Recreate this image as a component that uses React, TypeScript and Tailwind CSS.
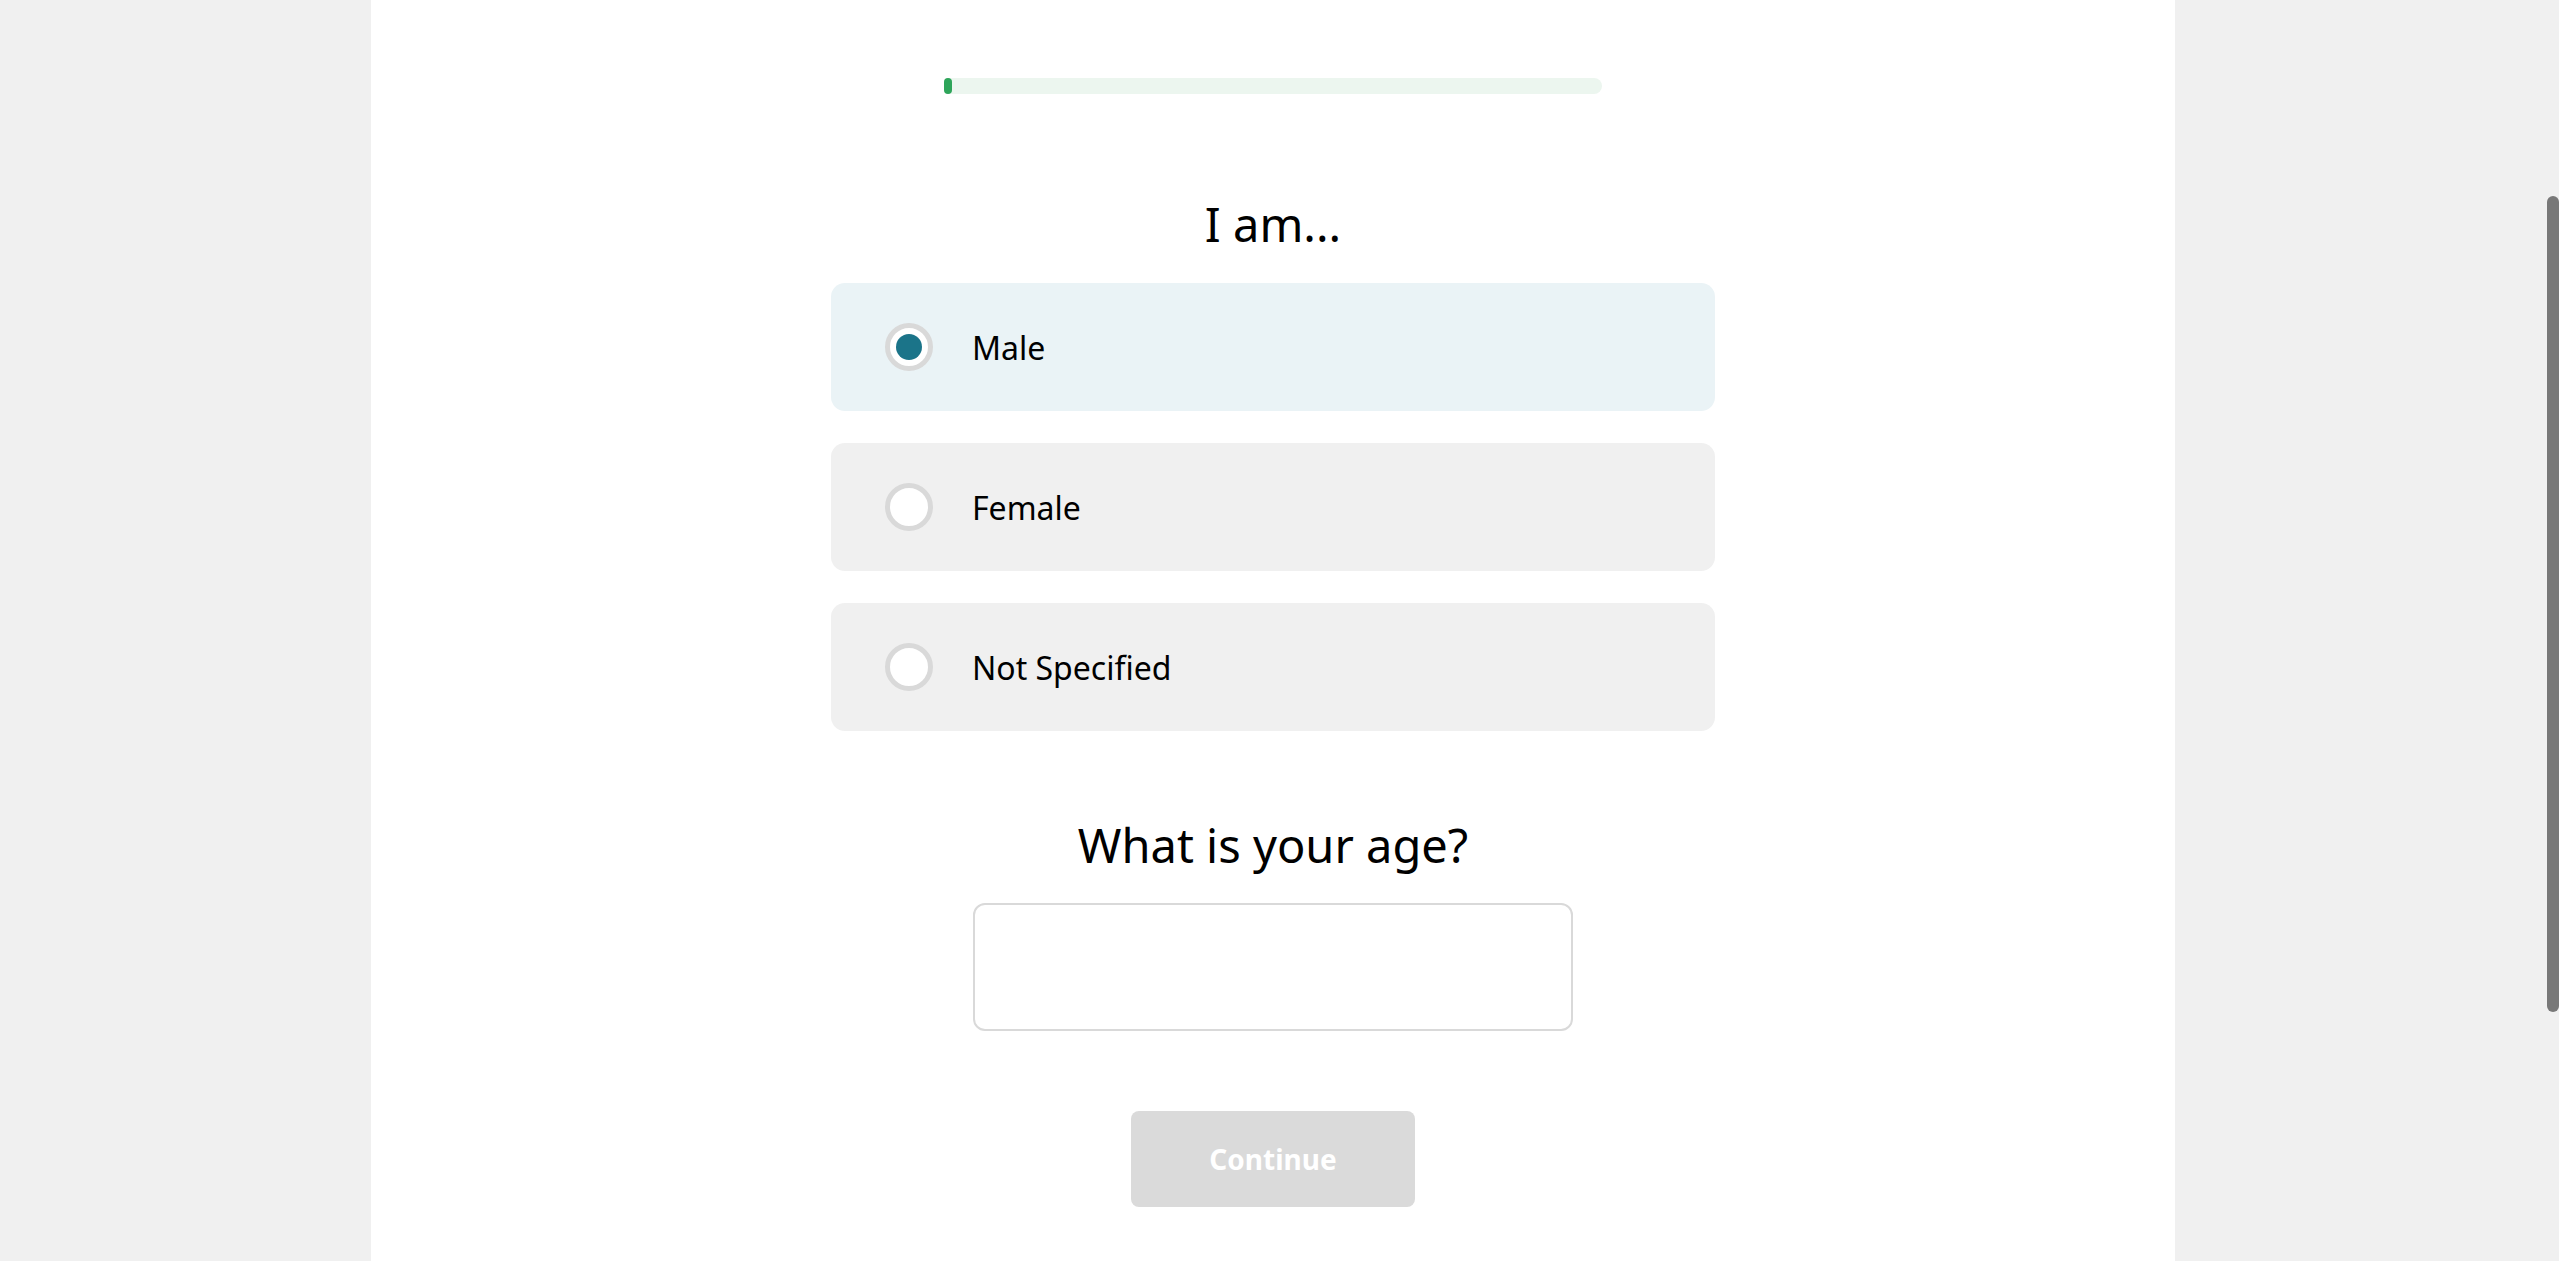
import { useState } from 'react';

const options = ['Male', 'Female', 'Not Specified'];

function Radio({ checked }: { checked: boolean }) {
  return (
    <span className="flex h-[48px] w-[48px] shrink-0 items-center justify-center rounded-full border-[5px] border-[#d9d9d9] bg-white">
      {checked && <span className="h-[26px] w-[26px] rounded-full bg-[#1b7489]" />}
    </span>
  );
}

export default function App() {
  const [gender, setGender] = useState('Male');
  const [age, setAge] = useState('');

  return (
    <div className="flex h-[1261px] w-full overflow-hidden bg-[#f0f0f0] font-['Noto_Sans',sans-serif] text-black">
      <div className="flex flex-1 justify-center">
        <main className="flex w-[1804px] flex-col items-center bg-white pt-[78px]">
          {/* progress */}
          <div className="h-[16px] w-[658px] rounded-full bg-[#ecf6ef]">
            <div className="h-[16px] w-[8px] rounded-full bg-[#2ea55a]" />
          </div>

          <h1 className="mt-[101px] text-[47px] leading-[58px] font-normal">I am...</h1>

          <div className="mt-[30px] flex w-[884px] flex-col gap-[32px]">
            {options.map((opt) => (
              <button
                key={opt}
                onClick={() => setGender(opt)}
                className={
                  'flex h-[128px] items-center gap-[39px] rounded-[14px] pl-[54px] text-left ' +
                  (gender === opt ? 'bg-[#eaf3f6]' : 'bg-[#f0f0f0]')
                }
              >
                <Radio checked={gender === opt} />
                <span className="pt-[2px] text-[32px] leading-none">{opt}</span>
              </button>
            ))}
          </div>

          <h2 className="mt-[85px] text-[47px] leading-[58px] font-normal">What is your age?</h2>

          <input
            value={age}
            onChange={(e) => setAge(e.target.value)}
            className="mt-[29px] h-[128px] w-[600px] rounded-[12px] border-2 border-[#d9d9d9] bg-white px-6 text-[31px] outline-none"
          />

          <button className="mt-[80px] h-[96px] w-[284px] rounded-[8px] bg-[#dadada] text-[28px] font-bold text-white">
            Continue
          </button>
        </main>
      </div>

      {/* scrollbar */}
      <div className="flex w-[13px] justify-end pt-[196px]">
        <div className="h-[816px] w-[12px] rounded-full bg-[#787878]" />
      </div>
    </div>
  );
}
